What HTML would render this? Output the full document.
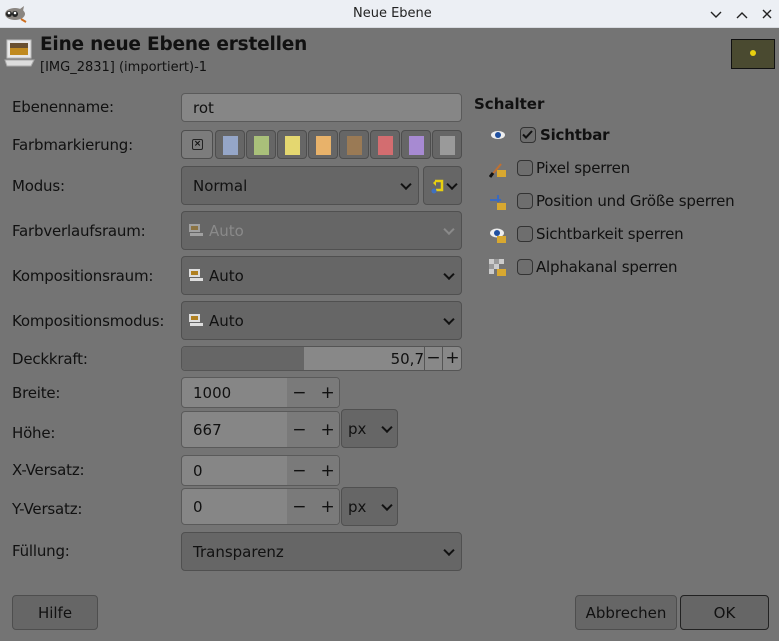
<!DOCTYPE html>
<html><head><meta charset="utf-8">
<style>
*{box-sizing:border-box;margin:0;padding:0}
body{width:779px;height:641px;background:#747474;font-family:"DejaVu Sans","Liberation Sans",sans-serif;color:#111;position:relative;overflow:hidden;font-size:15px}
.a{position:absolute}
.tb{left:0;top:0;width:779px;height:28px;background:#eceff4;border-bottom:1px solid #d8dbe0}
.lbl{position:absolute;left:12px;font-size:15px;color:#111;letter-spacing:-0.2px}
.entry{position:absolute;background:#868686;border:1px solid #5a5a5a;border-radius:4px;padding-left:11px;font-size:15px;display:flex;align-items:center}
.combo{position:absolute;background:#666;border:1px solid #505050;border-radius:4px;padding-left:11px;font-size:15px;display:flex;align-items:center}
.chev{position:absolute;right:8px;top:50%;width:8px;height:8px;border-right:2px solid #111;border-bottom:2px solid #111;transform:translateY(-70%) rotate(45deg)}
.sw{position:absolute;top:130px;width:30px;height:29px;background:#666;border:1px solid #4e4e4e;border-radius:4px}
.sw i{position:absolute;left:7px;top:5px;width:15px;height:19px}
.btn{position:absolute;background:#666;border:1px solid #4e4e4e;border-radius:4px;font-size:15px;display:flex;align-items:center;justify-content:center}
.spin{position:absolute;background:#7a7a7a;font-size:17px;display:flex;align-items:center;justify-content:center;gap:14px}
.cb{position:absolute;left:517px;width:16px;height:16px;border:1.5px solid #333;border-radius:4px;background:#6e6e6e}
.rt{position:absolute;left:536px;font-size:15px;letter-spacing:-0.2px}
.ic{position:absolute;left:489px;width:18px;height:18px}
.mini{position:absolute;width:16px;height:14px}
</style></head><body>
<div class="a tb"></div>
<svg class="a" style="left:3px;top:5px" width="24" height="18"><ellipse cx="12" cy="9" rx="10" ry="6" fill="#8a8580"/><circle cx="6" cy="9" r="3" fill="#222"/><circle cx="12" cy="9" r="3" fill="#222"/><circle cx="6" cy="8" r="1.3" fill="#fff"/><circle cx="12" cy="8" r="1.3" fill="#fff"/><path d="M17 4 L21 1 L20 6Z" fill="#8a8580"/><path d="M18 14 L23 17" stroke="#d07020" stroke-width="2"/></svg>
<div class="a" style="left:353px;top:6px;font-size:13px;color:#222">Neue Ebene</div>
<svg class="a" style="left:708px;top:8px" width="66" height="14" fill="none" stroke="#222" stroke-width="1.4"><path d="M3 4 L8 9 L13 4"/><path d="M29 10 L34 5 L39 10"/><path d="M55 2 L63 10 M63 2 L55 10"/></svg>

<svg class="a" style="left:4px;top:38px" width="32" height="30"><rect x="3" y="2" width="24" height="18" fill="#e8e8e8" stroke="#bbb"/><rect x="6" y="5" width="18" height="12" fill="#c08a20"/><rect x="6" y="5" width="18" height="5" fill="#6a5030"/><path d="M1 22 L30 22 L27 28 L3 28Z" fill="#ddd" stroke="#aaa"/></svg>
<div class="a" style="left:40px;top:34px;font-size:18.5px;font-weight:bold;letter-spacing:-0.2px">Eine neue Ebene erstellen</div>
<div class="a" style="left:40px;top:60px;font-size:13px">[IMG_2831] (importiert)-1</div>
<div class="a" style="left:731px;top:39px;width:44px;height:30px;background:#4a4a30;border:1px solid #111"><div class="a" style="left:18px;top:10px;width:6px;height:6px;background:#e8d010;border-radius:50%"></div></div>

<div class="lbl" style="top:98px">Ebenenname:</div>
<div class="entry" style="left:181px;top:93px;width:281px;height:29px">rot</div>

<div class="lbl" style="top:136px">Farbmarkierung:</div>
<div class="sw" style="left:181px;width:32px;background:#7c7c7c"><div class="a" style="left:10px;top:8px;width:11px;height:11px;border:1.5px solid #222;border-radius:2px;font-size:9px;line-height:8px;text-align:center;font-weight:bold">×</div></div>
<div class="sw" style="left:215px"><i style="background:#95a6c8"></i></div>
<div class="sw" style="left:246px"><i style="background:#a9c07a"></i></div>
<div class="sw" style="left:277px"><i style="background:#e4d770"></i></div>
<div class="sw" style="left:308px"><i style="background:#e8b26a"></i></div>
<div class="sw" style="left:339px"><i style="background:#9a7a55"></i></div>
<div class="sw" style="left:370px"><i style="background:#d36d70"></i></div>
<div class="sw" style="left:401px"><i style="background:#a78ad2"></i></div>
<div class="sw" style="left:432px"><i style="background:#9a9a9a"></i></div>

<div class="lbl" style="top:177px">Modus:</div>
<div class="combo" style="left:181px;top:166px;width:238px;height:39px">Normal<span class="chev"></span></div>
<div class="combo" style="left:423px;top:166px;width:39px;height:39px;padding:0"><svg class="a" style="left:6px;top:11px" width="16" height="16"><path d="M5 3 H12 V12 H6" fill="none" stroke="#e8d010" stroke-width="2.5"/><path d="M3 5 L6 2 L6 8Z" fill="#e8d010"/><circle cx="4" cy="13" r="2.5" fill="#4070c0"/></svg><span class="chev" style="right:5px"></span></div>

<div class="lbl" style="top:222px">Farbverlaufsraum:</div>
<div class="combo" style="left:181px;top:211px;width:281px;height:39px;color:#8a8a8a;padding-left:27px"><svg class="mini" style="left:6px;top:11px;opacity:.5"><rect x="1" y="1" width="11" height="8" fill="#ddd"/><rect x="3" y="3" width="7" height="4" fill="#b08020"/><rect x="2" y="10" width="13" height="3" fill="#ddd"/></svg>Auto<span class="chev" style="border-color:#8a8a8a"></span></div>

<div class="lbl" style="top:267px">Kompositionsraum:</div>
<div class="combo" style="left:181px;top:256px;width:281px;height:39px;padding-left:27px"><svg class="mini" style="left:6px;top:11px"><rect x="1" y="1" width="11" height="8" fill="#ddd"/><rect x="3" y="3" width="7" height="4" fill="#b08020"/><rect x="2" y="10" width="13" height="3" fill="#ddd"/></svg>Auto<span class="chev"></span></div>

<div class="lbl" style="top:312px">Kompositionsmodus:</div>
<div class="combo" style="left:181px;top:301px;width:281px;height:39px;padding-left:27px"><svg class="mini" style="left:6px;top:11px"><rect x="1" y="1" width="11" height="8" fill="#ddd"/><rect x="3" y="3" width="7" height="4" fill="#b08020"/><rect x="2" y="10" width="13" height="3" fill="#ddd"/></svg>Auto<span class="chev"></span></div>

<div class="lbl" style="top:350px">Deckkraft:</div>
<div class="a" style="left:181px;top:346px;width:281px;height:25px;background:#888;border:1px solid #555;border-radius:4px;overflow:hidden">
 <div class="a" style="left:0;top:0;width:122px;height:25px;background:#666"></div>
 <div class="a" style="left:190px;top:3px;width:52px;text-align:right;font-size:15px">50,7</div>
 <div class="a" style="left:242px;top:0;width:19px;height:25px;border-left:1px solid #555;border-right:1px solid #555;text-align:center;font-size:17px;line-height:22px">−</div>
 <div class="a" style="left:261px;top:0;width:19px;height:25px;text-align:center;font-size:17px;line-height:22px">+</div>
</div>

<div class="lbl" style="top:384px">Breite:</div>
<div class="entry" style="left:181px;top:377px;width:159px;height:31px;overflow:hidden">1000<div class="spin" style="left:105px;top:0;width:53px;height:29px">−<span>+</span></div></div>
<div class="lbl" style="top:424px">Höhe:</div>
<div class="entry" style="left:181px;top:411px;width:159px;height:37px;overflow:hidden">667<div class="spin" style="left:105px;top:0;width:53px;height:35px">−<span>+</span></div></div>
<div class="combo" style="left:341px;top:409px;width:57px;height:39px;padding-left:6px">px<span class="chev" style="right:6px"></span></div>

<div class="lbl" style="top:461px">X-Versatz:</div>
<div class="entry" style="left:181px;top:455px;width:159px;height:31px;overflow:hidden">0<div class="spin" style="left:105px;top:0;width:53px;height:29px">−<span>+</span></div></div>
<div class="lbl" style="top:500px">Y-Versatz:</div>
<div class="entry" style="left:181px;top:488px;width:159px;height:37px;overflow:hidden">0<div class="spin" style="left:105px;top:0;width:53px;height:35px">−<span>+</span></div></div>
<div class="combo" style="left:341px;top:487px;width:57px;height:39px;padding-left:6px">px<span class="chev" style="right:6px"></span></div>

<div class="lbl" style="top:542px">Füllung:</div>
<div class="combo" style="left:181px;top:532px;width:281px;height:39px">Transparenz<span class="chev"></span></div>

<div class="a" style="left:474px;top:95px;font-size:15px;font-weight:bold">Schalter</div>
<svg class="ic" style="top:126px"><ellipse cx="9" cy="9" rx="7" ry="4" fill="#eee"/><circle cx="9" cy="9" r="3" fill="#2050a0"/></svg>
<div class="cb" style="top:127px;left:520px"><svg width="13" height="13" class="a" style="left:0;top:0"><path d="M2 6.5 L5 9.5 L11 3" fill="none" stroke="#111" stroke-width="2"/></svg></div>
<div class="rt" style="left:540px;top:126px;font-weight:bold">Sichtbar</div>

<svg class="ic" style="top:160px"><path d="M2 16 L12 4" stroke="#c07030" stroke-width="2"/><path d="M1 17 L4 13" stroke="#111" stroke-width="3"/><rect x="8" y="10" width="9" height="7" fill="#d8a830"/></svg>
<div class="cb" style="top:160px"></div><div class="rt" style="top:159px">Pixel sperren</div>
<svg class="ic" style="top:193px"><path d="M1 7 H12 M9 2 V9" stroke="#3a6ac0" stroke-width="2"/><rect x="8" y="10" width="9" height="7" fill="#d8a830"/></svg>
<div class="cb" style="top:193px"></div><div class="rt" style="top:192px">Position und Größe sperren</div>
<svg class="ic" style="top:226px"><ellipse cx="8" cy="7" rx="7" ry="4.5" fill="#eee"/><circle cx="8" cy="7" r="3" fill="#2050a0"/><rect x="8" y="10" width="9" height="7" fill="#d8a830"/></svg>
<div class="cb" style="top:226px"></div><div class="rt" style="top:225px">Sichtbarkeit sperren</div>
<svg class="ic" style="top:259px"><rect x="0" y="0" width="5" height="5" fill="#ccc"/><rect x="5" y="5" width="5" height="5" fill="#ccc"/><rect x="10" y="0" width="5" height="5" fill="#ccc"/><rect x="0" y="10" width="5" height="5" fill="#ccc"/><rect x="5" y="0" width="5" height="5" fill="#999"/><rect x="0" y="5" width="5" height="5" fill="#999"/><rect x="8" y="10" width="9" height="7" fill="#d8a830"/></svg>
<div class="cb" style="top:259px"></div><div class="rt" style="top:258px">Alphakanal sperren</div>

<div class="btn" style="left:12px;top:595px;width:86px;height:35px">Hilfe</div>
<div class="btn" style="left:575px;top:595px;width:102px;height:35px">Abbrechen</div>
<div class="btn" style="left:680px;top:595px;width:89px;height:35px;border-color:#222">OK</div>
</body></html>
